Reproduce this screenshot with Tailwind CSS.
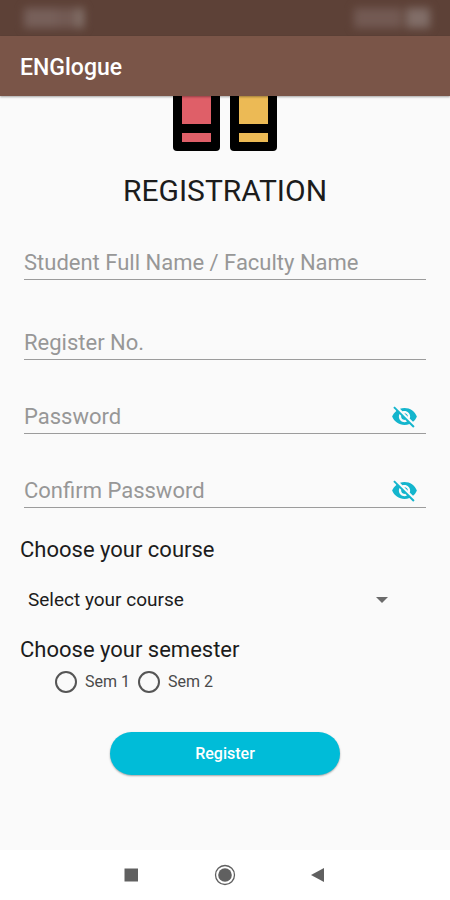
<!DOCTYPE html>
<html lang="en">
<head>
<meta charset="utf-8">
<meta name="viewport" content="width=device-width, initial-scale=1">
<title>ENGlogue</title>
<script src="https://cdn.jsdelivr.net/npm/@tailwindcss/browser@4"></script>
</head>
<body class="flex min-h-screen flex-col bg-[#fafafa] font-['Roboto',sans-serif] text-[#1c1c1c]">
  <div class="flex h-9 items-center justify-between bg-[#5d4137] pl-6 pr-5" aria-hidden="true">
    <div class="flex blur-[4px]">
      <span class="h-5 w-8 bg-[#77605a]"></span>
      <span class="h-5 w-5 bg-[#735b54]"></span>
      <span class="h-5 w-2 bg-[#83716a]"></span>
    </div>
    <div class="flex gap-1 blur-[4px]">
      <span class="h-5 w-12 bg-[#735a53]"></span>
      <span class="h-5 w-6 bg-[#816e68]"></span>
    </div>
  </div>
  <header class="z-10 flex h-15 items-center bg-[#7a5548] px-5 pt-1 shadow-[0_1px_2px_rgba(0,0,0,0.35)]">
    <h1 class="text-[23px] leading-8 font-medium text-white">ENGlogue</h1>
  </header>

  <main class="flex flex-1 flex-col px-5 pb-8">
    <svg class="mx-auto h-[55px] w-[106px]" viewBox="0 0 106 55" aria-hidden="true">
      <path d="M1 0H48V51Q48 55 44 55H5Q1 55 1 51Z" fill="#000"/>
      <path d="M58 0H105V51Q105 55 101 55H62Q58 55 58 51Z" fill="#000"/>
      <path d="M10 0H39V28H10ZM10 37H39V46H10Z" fill="#df5f68"/>
      <path d="M67 0H96V28H67ZM67 37H96V46H67Z" fill="#ecba55"/>
    </svg>
    <h2 class="mt-6 text-center text-[30px] leading-8">REGISTRATION</h2>

    <form class="flex flex-col">
      <div class="mx-1 mt-[39px] flex flex-col gap-10">
        <div class="mb-[6px] flex h-[34px] border-b border-[#9c9c9c]">
          <input type="text" aria-label="Student Full Name / Faculty Name" placeholder="Student Full Name / Faculty Name" class="w-full min-w-0 text-[22px] placeholder:text-[#979797] outline-none">
        </div>
        <div class="flex h-[34px] border-b border-[#9c9c9c]">
          <input type="text" aria-label="Register No." placeholder="Register No." class="w-full min-w-0 text-[22px] placeholder:text-[#979797] outline-none">
        </div>
        <div class="flex h-[34px] items-center border-b border-[#9c9c9c] pr-2">
          <input type="password" aria-label="Password" placeholder="Password" class="w-full min-w-0 text-[22px] placeholder:text-[#979797] outline-none">
          <button type="button" aria-label="Show password">
            <svg class="size-[27px] fill-[#14b5cd]" viewBox="0 0 24 24"><path d="M12 7c2.76 0 5 2.24 5 5 0 .65-.13 1.26-.36 1.83l2.92 2.92c1.51-1.26 2.7-2.89 3.43-4.75-1.73-4.39-6-7.5-11-7.5-1.4 0-2.74.25-3.98.7l2.16 2.16C10.74 7.13 11.35 7 12 7zM2 4.27l2.28 2.28.46.46C3.08 8.3 1.78 10.02 1 12c1.73 4.39 6 7.5 11 7.5 1.55 0 3.03-.3 4.38-.84l.42.42L19.73 22 21 20.73 3.27 3 2 4.27zM7.53 9.8l1.55 1.55c-.05.21-.08.43-.08.65 0 1.66 1.34 3 3 3 .22 0 .44-.03.65-.08l1.55 1.55c-.67.33-1.41.53-2.2.53-2.76 0-5-2.24-5-5 0-.79.2-1.53.53-2.2zm4.31-.78l3.15 3.15.02-.16c0-1.66-1.34-3-3-3l-.17.01z"/></svg>
          </button>
        </div>
        <div class="flex h-[34px] items-center border-b border-[#9c9c9c] pr-2">
          <input type="password" aria-label="Confirm Password" placeholder="Confirm Password" class="w-full min-w-0 text-[22px] placeholder:text-[#979797] outline-none">
          <button type="button" aria-label="Show confirmed password">
            <svg class="size-[27px] fill-[#14b5cd]" viewBox="0 0 24 24"><path d="M12 7c2.76 0 5 2.24 5 5 0 .65-.13 1.26-.36 1.83l2.92 2.92c1.51-1.26 2.7-2.89 3.43-4.75-1.73-4.39-6-7.5-11-7.5-1.4 0-2.74.25-3.98.7l2.16 2.16C10.74 7.13 11.35 7 12 7zM2 4.27l2.28 2.28.46.46C3.08 8.3 1.78 10.02 1 12c1.73 4.39 6 7.5 11 7.5 1.55 0 3.03-.3 4.38-.84l.42.42L19.73 22 21 20.73 3.27 3 2 4.27zM7.53 9.8l1.55 1.55c-.05.21-.08.43-.08.65 0 1.66 1.34 3 3 3 .22 0 .44-.03.65-.08l1.55 1.55c-.67.33-1.41.53-2.2.53-2.76 0-5-2.24-5-5 0-.79.2-1.53.53-2.2zm4.31-.78l3.15 3.15.02-.16c0-1.66-1.34-3-3-3l-.17.01z"/></svg>
          </button>
        </div>
      </div>

      <label for="course" class="mt-[30px] text-[22px] leading-6">Choose your course</label>
      <div class="mt-5 mr-10 ml-2 grid items-center">
        <select id="course" class="col-start-1 row-start-1 h-9 w-full appearance-none text-[19px] outline-none">
          <option>Select your course</option>
        </select>
        <svg class="pointer-events-none col-start-1 row-start-1 mr-[2px] h-[6px] w-3 justify-self-end fill-[#6b6b6b]" viewBox="0 0 12 6" aria-hidden="true"><path d="M0 0H12L6 6Z"/></svg>
      </div>

      <fieldset class="mt-5">
        <legend class="text-[22px] leading-6">Choose your semester</legend>
        <div class="mt-2 ml-[35px] flex gap-2 text-base text-[#4a4a4a]">
          <label class="flex items-center gap-2"><input type="radio" name="semester" class="size-[22px] appearance-none rounded-full border-2 border-[#555] checked:border-[7px] checked:border-[#00bcd8]">Sem 1</label>
          <label class="flex items-center gap-2"><input type="radio" name="semester" class="size-[22px] appearance-none rounded-full border-2 border-[#555] checked:border-[7px] checked:border-[#00bcd8]">Sem 2</label>
        </div>
      </fieldset>

      <button type="submit" class="mt-[38px] h-[43px] w-[56%] self-center rounded-full bg-[#00bcd8] text-base font-medium text-white shadow-[0_1px_2px_rgba(0,0,0,0.35)]">Register</button>
    </form>
  </main>

  <nav class="flex h-[50px] items-center justify-center gap-[72px] bg-white" aria-label="System">
    <button type="button" aria-label="Recent apps"><svg class="size-[22px]" viewBox="0 0 22 22"><path d="M4.500 4.500H18V17.500H4.500Z" fill="#606060"/></svg></button>
    <button type="button" aria-label="Home"><svg class="size-[22px]" viewBox="0 0 22 22"><circle cx="11" cy="11" r="9.500" fill="none" stroke="#606060" stroke-width="1.300"/><circle cx="11" cy="11" r="6.800" fill="#606060"/></svg></button>
    <button type="button" aria-label="Back"><svg class="size-[22px]" viewBox="0 0 22 22"><path d="M3 11L16 4V18Z" fill="#606060"/></svg></button>
  </nav>
</body>
</html>
